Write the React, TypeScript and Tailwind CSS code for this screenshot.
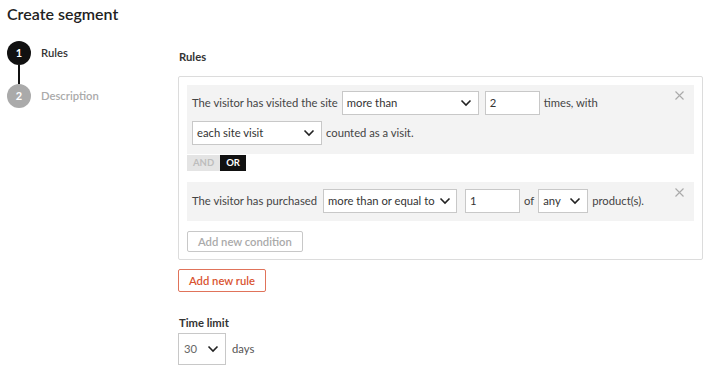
import React from 'react';

const font = { fontFamily: 'Lato, "Liberation Sans", sans-serif' };

const Chevron: React.FC = () => (
  <svg width="12" height="8" viewBox="0 0 12 8" className="shrink-0">
    <path d="M1.5 1.5 L6 6 L10.5 1.5" fill="none" stroke="#222" strokeWidth="1.6" />
  </svg>
);

const Select: React.FC<{ value: string; className: string }> = ({ value, className }) => (
  <div className={`flex items-center justify-between gap-1 h-6 bg-white border border-[#c8c8c8] pl-1 pr-[6px] text-[11.25px] text-[#333] whitespace-nowrap ${className}`}>
    <span>{value}</span>
    <Chevron />
  </div>
);

const Input: React.FC<{ value: string; className: string }> = ({ value, className }) => (
  <div className={`flex items-center h-6 bg-white border border-[#c8c8c8] pl-1 text-[11.25px] text-[#333] ${className}`}>
    {value}
  </div>
);

const Close: React.FC = () => (
  <svg width="9" height="9" viewBox="0 0 9 9" className="absolute right-[10px] top-[6px]">
    <path d="M0.5 0.5 L8.5 8.5 M8.5 0.5 L0.5 8.5" stroke="#aaa" strokeWidth="1.1" />
  </svg>
);

export default function App() {
  return (
    <div className="w-[710px] h-[371px] bg-white text-[#444] overflow-hidden" style={font}>
      <h1 className="pl-[7px] pt-[4px] text-[16px] font-semibold text-[#222] leading-[20px]">Create segment</h1>

      <div className="flex mt-[17px] pl-[7px]">
        {/* stepper */}
        <div className="w-[171px] shrink-0">
          <div className="flex items-center gap-[10px]">
            <div className="w-6 h-6 rounded-full bg-[#111] text-white text-[11px] font-bold flex items-center justify-center">1</div>
            <span className="text-[11.25px] font-semibold text-[#333]">Rules</span>
          </div>
          <div className="w-[2px] h-[19px] bg-[#111] ml-[11px]" />
          <div className="flex items-center gap-[10px]">
            <div className="w-6 h-6 rounded-full bg-[#aaa] text-white text-[11px] font-bold flex items-center justify-center">2</div>
            <span className="text-[11.25px] font-semibold text-[#aaa]">Description</span>
          </div>
        </div>

        {/* content */}
        <div className="w-[525px]">
          <h2 className="pl-[1px] pt-[8px] text-[11.25px] font-bold text-[#333] leading-[16px]">Rules</h2>

          <div className="mt-[11px] border border-[#dcdcdc] rounded-[2px] px-2 pt-2 pb-[7px]">
            <div className="relative bg-[#f3f3f3] px-[5px] pt-[6px] pb-[9px] flex flex-col gap-[6px]">
              <div className="flex items-center gap-1 text-[11.25px]">
                <span>The visitor has visited the site</span>
                <Select value="more than" className="w-[137px]" />
                <Input value="2" className="w-[55px] ml-[2px]" />
                <span>times, with</span>
              </div>
              <div className="flex items-center gap-1 text-[11.25px]">
                <Select value="each site visit" className="w-[130px]" />
                <span>counted as a visit.</span>
              </div>
              <Close />
            </div>

            <div className="flex mt-[1px] text-[9.5px] font-bold leading-[16px]">
              <span className="bg-[#e4e4e4] text-[#bdbdbd] px-[6px]">AND</span>
              <span className="bg-[#111] text-white px-[6px]">OR</span>
            </div>

            <div className="relative mt-[11px] bg-[#f3f3f3] px-[5px] pt-[7px] pb-[8px]">
              <div className="flex items-center gap-1 text-[11.25px]">
                <span>The visitor has purchased</span>
                <Select value="more than or equal to" className="w-[134px] ml-[2px]" />
                <Input value="1" className="w-[55px] ml-[4px]" />
                <span>of</span>
                <Select value="any" className="w-[50px]" />
                <span>product(s).</span>
              </div>
              <Close />
            </div>

            <button className="mt-[10px] h-[21px] px-[10px] border border-[#c8c8c8] rounded-[2px] bg-white text-[11.25px] font-semibold text-[#aaa] leading-[19px]">
              Add new condition
            </button>
          </div>

          <button className="mt-[9px] h-[23px] px-[10px] border border-[#e0735a] rounded-[2px] bg-white text-[11.25px] font-semibold text-[#d9532f] leading-[21px]">
            Add new rule
          </button>

          <h3 className="mt-[23px] pl-[1px] text-[11.25px] font-bold text-[#333] leading-[16px]">Time limit</h3>
          <div className="flex items-center gap-[6px] mt-[2px] text-[11.25px]">
            <Select value="30" className="w-[48px] !h-[32px] pl-[5px] text-[#666]" />
            <span className="text-[#555]">days</span>
          </div>
        </div>
      </div>
    </div>
  );
}
